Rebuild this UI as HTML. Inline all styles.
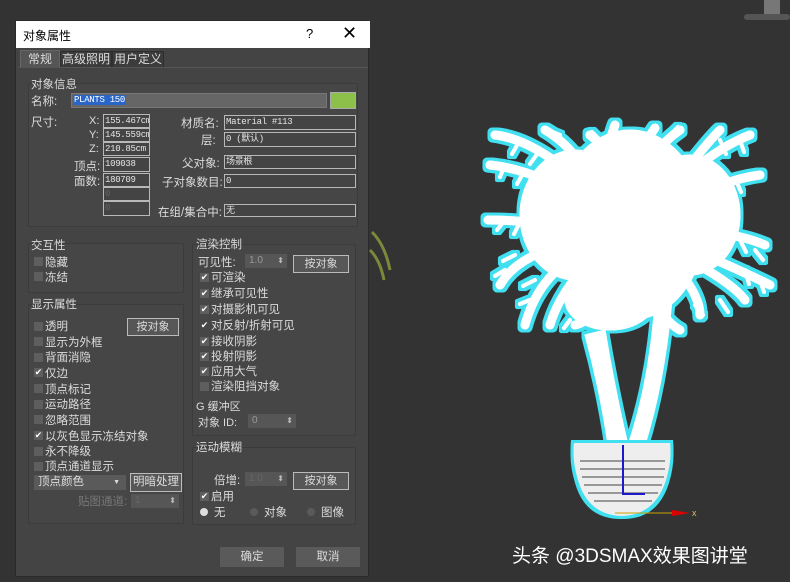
<!DOCTYPE html>
<html><head><meta charset="utf-8">
<style>
*{margin:0;padding:0;box-sizing:border-box}
body{width:790px;height:582px;background:#333333;position:relative;overflow:hidden;font-family:"Liberation Sans","Noto Sans CJK SC",sans-serif;font-size:11px;color:#dcdcdc}
.a{position:absolute;white-space:nowrap}
.dlg{position:absolute;left:15px;top:20px;width:354px;height:557px;background:#444;border:1px solid #2a2a2a}
.title{position:absolute;left:0;top:0;width:354px;height:27px;background:#fff;color:#000;font-size:12px}
.grp{position:absolute;border:1px solid #3b3b3b;border-radius:2px;background:#464646}
.fld{position:absolute;border:1px solid #b8b8b8;background:#444;color:#e6e6e6;font-family:"Liberation Mono","Noto Sans CJK SC",monospace;font-size:9px;line-height:12px;padding-left:1px;overflow:hidden;letter-spacing:-0.3px}
.btn{position:absolute;border:1px solid #bbb;background:#575757;color:#ddd;text-align:center;font-size:11px}
.btn2{position:absolute;background:#5a5a5a;color:#ddd;text-align:center;font-size:11px}
.cb{position:absolute;width:9px;height:9px;background:#5e5e5e}
.ck{position:absolute;width:9px;height:9px;background:#5e5e5e;color:#fff;font-size:9px;line-height:9px;text-align:center}
.sp{position:absolute;background:#565656;color:#999;font-size:10px;padding-left:4px;line-height:14px}
.sp:after{content:"⬍";position:absolute;right:3px;top:0;font-size:8px;color:#bbb}
.l{font-size:11.5px}
</style></head><body>

<svg class="a" style="left:0;top:0" width="790" height="582">
<defs>
<filter id="g" x="-20%" y="-20%" width="140%" height="140%">
<feMorphology in="SourceAlpha" operator="dilate" radius="3" result="d"/>
<feFlood flood-color="#3fe0f0"/><feComposite in2="d" operator="in" result="c"/>
<feMerge><feMergeNode in="c"/><feMergeNode in="SourceGraphic"/></feMerge>
</filter>
</defs>
<rect x="764" y="0" width="16" height="16" fill="#777"/>
<rect x="744" y="14" width="46" height="6" rx="3" fill="#555"/>
<g filter="url(#g)" fill="#fff" stroke="#fff" stroke-linecap="round">
<path d="M585 335 Q600 390 608 445 L628 445 Q615 390 605 330Z"/>
<path d="M655 300 Q650 380 628 445 L645 445 Q665 380 672 300Z"/>
<ellipse cx="630" cy="225" rx="75" ry="95"/>
<ellipse cx="575" cy="215" rx="55" ry="65"/>
<ellipse cx="690" cy="215" rx="50" ry="60"/>
<ellipse cx="610" cy="300" rx="45" ry="30"/>
<g fill="none" stroke-width="9">
<path d="M600 200 Q540 140 495 135"/>
<path d="M600 210 Q540 170 490 165"/>
<path d="M590 230 Q530 220 488 220"/>
<path d="M590 240 Q520 250 500 285"/>
<path d="M590 250 Q540 270 525 325"/>
<path d="M600 250 Q560 290 550 325"/>
<path d="M600 200 Q580 150 545 130"/>
<path d="M620 190 Q610 150 590 135"/>
<path d="M640 190 Q650 150 680 130"/>
<path d="M660 200 Q710 150 750 135"/>
<path d="M660 205 Q700 150 720 130"/>
<path d="M670 210 Q720 180 760 175"/>
<path d="M670 230 Q730 230 765 245"/>
<path d="M670 240 Q740 270 770 285"/>
<path d="M670 250 Q730 280 745 300"/>
<path d="M660 250 Q700 290 700 315"/>
<path d="M620 260 Q600 320 575 325"/>
<path d="M640 270 Q660 320 680 330"/>
<path d="M620 180 Q640 150 655 128"/>
<path d="M610 180 Q605 150 615 125"/>
</g>
<g fill="none" stroke-width="4">
<path d="M520 140 l-8 14 M540 150 l-10 14 M505 165 l-5 12 M525 170 l-8 14 M505 220 l-8 10 M520 222 l-6 12 M505 270 l-10 6 M515 255 l-12 6 M530 300 l-10 4 M535 280 l-12 6 M720 140 l6 14 M740 140 l4 12 M735 178 l6 14 M715 182 l8 12 M740 240 l6 12 M755 250 l8 10 M745 270 l4 14 M760 280 l4 12 M720 300 l8 12 M695 305 l8 10 M570 320 l-6 8 M670 135 l8 -8 M560 135 l-10 -4 M600 140 l-8 -8"/>
</g>
</g>
<g filter="url(#g)">
<path d="M574 443 L670 443 Q672 460 666 480 Q655 515 622 516 Q588 515 578 480 Q572 460 574 443Z" fill="#eee"/>
</g>
<g fill="#444" opacity="0.5">
<rect x="580" y="460" width="85" height="2"/><rect x="580" y="468" width="85" height="2"/><rect x="582" y="476" width="82" height="2"/><rect x="584" y="484" width="78" height="2"/><rect x="588" y="492" width="70" height="2"/><rect x="594" y="500" width="58" height="2"/>
</g>
<line x1="623" y1="445" x2="623" y2="495" stroke="#1a1acc" stroke-width="2"/>
<line x1="623" y1="494" x2="645" y2="494" stroke="#1a1acc" stroke-width="2"/>
<line x1="615" y1="513" x2="680" y2="513" stroke="#c8a000" stroke-width="1"/>
<path d="M672 510 L690 513 L672 516Z" fill="#d00"/>
<text x="692" y="516" fill="#d8c060" font-size="9" font-family="Liberation Sans">x</text>
<path d="M372 232 Q385 245 390 270 M370 250 Q380 260 384 280" stroke="#7a8a3a" stroke-width="3" fill="none"/>
</svg>

<div class="a" style="left:512px;top:541px;font-size:19px;color:#fff;font-family:'Liberation Sans','Noto Sans CJK SC',sans-serif">头条 @3DSMAX效果图讲堂</div>

<div class="dlg">
<div class="title"><span class="a" style="left:7px;top:6px">对象属性</span><span class="a" style="left:290px;top:5px;font-size:13px">?</span><span class="a" style="left:326px;top:2px;font-size:18px">✕</span></div>
<div class="a" style="left:4px;top:29px;width:40px;height:18px;background:#555;border:1px solid #666;border-bottom:none;text-align:center;line-height:16px;font-size:12px">常规</div>
<div class="a" style="left:44px;top:30px;width:52px;height:17px;background:#3c3c3c;border:1px solid #2e2e2e;text-align:center;line-height:15px;font-size:12px">高级照明</div>
<div class="a" style="left:96px;top:30px;width:52px;height:17px;background:#3c3c3c;border:1px solid #2e2e2e;text-align:center;line-height:15px;font-size:12px">用户定义</div>
<div class="a" style="left:2px;top:46px;width:350px;height:1px;background:#555"></div>

<div class="grp" style="left:12px;top:62px;width:330px;height:144px"></div>
<span class="a l" style="left:15px;top:55px">对象信息</span>
<span class="a l" style="left:15px;top:72px">名称:</span>
<div class="fld" style="left:55px;top:72px;width:256px;height:15px;background:#666;border-color:#777"><span style="background:#2a66c8;color:#fff;padding:0 1px">PLANTS 150</span></div>
<div class="a" style="left:314px;top:71px;width:26px;height:17px;background:#8cc04a;border:1px solid #aaa"></div>
<span class="a l" style="left:15px;top:93px">尺寸:</span>
<span class="a" style="left:73px;top:94px">X:</span><div class="fld" style="left:87px;top:93px;width:47px;height:14px">155.467cm</div>
<span class="a" style="left:73px;top:108px">Y:</span><div class="fld" style="left:87px;top:107px;width:47px;height:14px">145.559cm</div>
<span class="a" style="left:73px;top:122px">Z:</span><div class="fld" style="left:87px;top:121px;width:47px;height:14px">210.85cm</div>
<span class="a l" style="left:58px;top:137px">顶点:</span><div class="fld" style="left:87px;top:136px;width:47px;height:15px">109038</div>
<span class="a l" style="left:58px;top:152px">面数:</span><div class="fld" style="left:87px;top:152px;width:47px;height:14px">180709</div>
<div class="fld" style="left:87px;top:166px;width:47px;height:14px;color:#666">0</div>
<div class="fld" style="left:87px;top:180px;width:47px;height:15px;color:#666">0</div>
<span class="a l" style="left:165px;top:94px">材质名:</span><div class="fld" style="left:208px;top:94px;width:132px;height:15px">Material #113</div>
<span class="a l" style="left:185px;top:111px">层:</span><div class="fld" style="left:208px;top:111px;width:132px;height:15px">0 (默认)</div>
<span class="a l" style="left:166px;top:134px">父对象:</span><div class="fld" style="left:208px;top:134px;width:132px;height:14px">场景根</div>
<span class="a l" style="left:146px;top:153px">子对象数目:</span><div class="fld" style="left:208px;top:153px;width:132px;height:14px">0</div>
<span class="a l" style="left:142px;top:183px">在组/集合中:</span><div class="fld" style="left:208px;top:183px;width:132px;height:13px">无</div>

<div class="grp" style="left:12px;top:222px;width:156px;height:50px"></div>
<span class="a l" style="left:15px;top:216px">交互性</span>
<div class="cb" style="left:18px;top:236px"></div><span class="a l" style="left:29px;top:233px">隐藏</span>
<div class="cb" style="left:18px;top:251px"></div><span class="a l" style="left:29px;top:248px">冻结</span>

<div class="grp" style="left:12px;top:283px;width:156px;height:220px"></div>
<span class="a l" style="left:15px;top:275px">显示属性</span>
<div class="btn" style="left:111px;top:297px;width:52px;height:18px;line-height:16px">按对象</div>
<div class="cb" style="left:18px;top:301px"></div><span class="a l" style="left:29px;top:297px">透明</span>
<div class="cb" style="left:18px;top:316px"></div><span class="a l" style="left:29px;top:313px">显示为外框</span>
<div class="cb" style="left:18px;top:332px"></div><span class="a l" style="left:29px;top:328px">背面消隐</span>
<div class="ck" style="left:18px;top:347px">✔</div><span class="a l" style="left:29px;top:344px">仅边</span>
<div class="cb" style="left:18px;top:363px"></div><span class="a l" style="left:29px;top:360px">顶点标记</span>
<div class="cb" style="left:18px;top:379px"></div><span class="a l" style="left:29px;top:375px">运动路径</span>
<div class="cb" style="left:18px;top:394px"></div><span class="a l" style="left:29px;top:391px">忽略范围</span>
<div class="ck" style="left:18px;top:410px">✔</div><span class="a l" style="left:29px;top:407px">以灰色显示冻结对象</span>
<div class="cb" style="left:18px;top:426px"></div><span class="a l" style="left:29px;top:422px">永不降级</span>
<div class="cb" style="left:18px;top:441px"></div><span class="a l" style="left:29px;top:437px">顶点通道显示</span>
<div class="a l" style="left:18px;top:454px;width:92px;height:15px;background:#5a5a5a;padding-left:4px;line-height:15px">顶点颜色<span style="position:absolute;right:6px;font-size:7px">▼</span></div>
<div class="btn l" style="left:114px;top:452px;width:52px;height:19px;line-height:17px">明暗处理</div>
<span class="a l" style="left:62px;top:472px;color:#777">贴图通道:</span>
<div class="sp" style="left:115px;top:473px;width:48px;height:14px;color:#666">1</div>

<div class="grp" style="left:176px;top:223px;width:164px;height:192px"></div>
<span class="a l" style="left:180px;top:215px">渲染控制</span>
<span class="a l" style="left:182px;top:233px">可见性:</span>
<div class="sp" style="left:229px;top:233px;width:42px;height:14px">1.0</div>
<div class="btn" style="left:277px;top:234px;width:56px;height:18px;line-height:16px">按对象</div>
<div class="ck" style="left:184px;top:252px">✔</div><span class="a l" style="left:195px;top:248px">可渲染</span>
<div class="ck" style="left:184px;top:268px">✔</div><span class="a l" style="left:195px;top:264px">继承可见性</span>
<div class="ck" style="left:184px;top:284px">✔</div><span class="a l" style="left:195px;top:280px">对摄影机可见</span>
<div class="ck" style="left:184px;top:300px;background:none">✔</div><span class="a l" style="left:195px;top:296px">对反射/折射可见</span>
<div class="ck" style="left:184px;top:316px">✔</div><span class="a l" style="left:195px;top:312px">接收阴影</span>
<div class="ck" style="left:184px;top:331px">✔</div><span class="a l" style="left:195px;top:327px">投射阴影</span>
<div class="ck" style="left:184px;top:346px">✔</div><span class="a l" style="left:195px;top:342px">应用大气</span>
<div class="cb" style="left:184px;top:361px"></div><span class="a l" style="left:195px;top:357px">渲染阻挡对象</span>
<span class="a" style="left:180px;top:377px">G 缓冲区</span>
<span class="a" style="left:182px;top:393px">对象 ID:</span>
<div class="sp" style="left:232px;top:393px;width:48px;height:14px">0</div>

<div class="grp" style="left:176px;top:426px;width:164px;height:78px"></div>
<span class="a l" style="left:180px;top:418px">运动模糊</span>
<span class="a l" style="left:198px;top:451px">倍增:</span>
<div class="sp" style="left:229px;top:451px;width:42px;height:14px;color:#666">1.0</div>
<div class="btn" style="left:277px;top:451px;width:56px;height:18px;line-height:16px">按对象</div>
<div class="ck" style="left:184px;top:471px">✔</div><span class="a l" style="left:195px;top:467px">启用</span>
<div class="a" style="left:184px;top:487px;width:8px;height:8px;border-radius:50%;background:#ddd"></div><span class="a l" style="left:198px;top:483px">无</span>
<div class="a" style="left:234px;top:487px;width:8px;height:8px;border-radius:50%;background:#5a5a5a"></div><span class="a l" style="left:248px;top:483px">对象</span>
<div class="a" style="left:291px;top:487px;width:8px;height:8px;border-radius:50%;background:#5a5a5a"></div><span class="a l" style="left:305px;top:483px">图像</span>

<div class="btn2 l" style="left:204px;top:526px;width:64px;height:20px;line-height:20px">确定</div>
<div class="btn2 l" style="left:280px;top:526px;width:64px;height:20px;line-height:20px">取消</div>
</div>
</body></html>
